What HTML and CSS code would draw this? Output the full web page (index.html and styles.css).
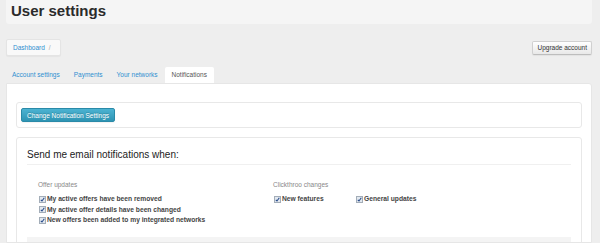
FILE: index.html
```html
<!DOCTYPE html>
<html lang="en">
<head>
  <meta charset="UTF-8">
  <meta name="viewport" content="width=device-width, initial-scale=1">
  <title>User settings</title>
  <link rel="stylesheet" href="styles.css">
</head>
<body>

<div class="page">
  <div class="page-header">
    <h1>User settings</h1>
  </div>

  <div class="toolbar">
    <ul class="breadcrumb">
      <li><a href="#">Dashboard</a> <span class="divider">/</span></li>
    </ul>
    <button class="btn">Upgrade account</button>
  </div>

  <ul class="nav-tabs">
    <li><a href="#">Account settings</a></li>
    <li><a href="#">Payments</a></li>
    <li><a href="#">Your networks</a></li>
    <li class="active"><a href="#">Notifications</a></li>
  </ul>

  <div class="tab-content">
    <div class="well">
      <button class="btn btn-info">Change Notification Settings</button>
    </div>

    <div class="box">
      <h3>Send me email notifications when:</h3>
      <div class="columns">
        <div class="col col-offers">
          <p class="group-label">Offer updates</p>
          <label class="check"><span class="box-check"><svg width="7" height="7" viewBox="0 0 7 7"><rect x="0.5" y="0.5" width="6" height="6" fill="#e2e8ef" stroke="#a3adb8"/><path d="M1.8 3.8 L3 5 L5.3 1.8" fill="none" stroke="#2a4d8c" stroke-width="1.1"/></svg></span>My active offers have been removed</label>
          <label class="check"><span class="box-check"><svg width="7" height="7" viewBox="0 0 7 7"><rect x="0.5" y="0.5" width="6" height="6" fill="#e2e8ef" stroke="#a3adb8"/><path d="M1.8 3.8 L3 5 L5.3 1.8" fill="none" stroke="#2a4d8c" stroke-width="1.1"/></svg></span>My active offer details have been changed</label>
          <label class="check"><span class="box-check"><svg width="7" height="7" viewBox="0 0 7 7"><rect x="0.5" y="0.5" width="6" height="6" fill="#e2e8ef" stroke="#a3adb8"/><path d="M1.8 3.8 L3 5 L5.3 1.8" fill="none" stroke="#2a4d8c" stroke-width="1.1"/></svg></span>New offers been added to my integrated networks</label>
        </div>
        <div class="col">
          <p class="group-label">Clickthroo changes</p>
          <div class="check-row">
            <label class="check check-inline"><span class="box-check"><svg width="7" height="7" viewBox="0 0 7 7"><rect x="0.5" y="0.5" width="6" height="6" fill="#e2e8ef" stroke="#a3adb8"/><path d="M1.8 3.8 L3 5 L5.3 1.8" fill="none" stroke="#2a4d8c" stroke-width="1.1"/></svg></span>New features</label>
            <label class="check"><span class="box-check"><svg width="7" height="7" viewBox="0 0 7 7"><rect x="0.5" y="0.5" width="6" height="6" fill="#e2e8ef" stroke="#a3adb8"/><path d="M1.8 3.8 L3 5 L5.3 1.8" fill="none" stroke="#2a4d8c" stroke-width="1.1"/></svg></span>General updates</label>
          </div>
        </div>
      </div>
      <div class="form-actions"></div>
    </div>
  </div>
</div>

</body>
</html>
```

FILE: styles.css
```css
* {
  box-sizing: border-box;
}
body {
  font-family: 'Liberation Sans', Arial, sans-serif;
  font-size: 6.5px;
  background: #eeeeee;
  color: #333;
  margin: 0;
  height: 243px;
  overflow: hidden;
}
a {
  color: #2f8fd0;
  text-decoration: none;
}
.page {
  padding: 0 8px 0 6px;
}
.page-header {
  background: #f5f5f5;
  height: 24px;
  padding-left: 5px;
  border-radius: 0 0 3px 3px;
}
.page-header h1 {
  margin: 0;
  font-size: 15px;
  line-height: 22px;
  font-weight: 700;
  color: #2b2b2b;
}
.toolbar {
  display: flex;
  justify-content: space-between;
  align-items: center;
  margin-top: 15px;
}
.breadcrumb {
  list-style: none;
  margin: 0;
  padding: 0 10px 0 6px;
  height: 17px;
  line-height: 15px;
  background: #f9f9f9;
  border: 1px solid #e4e4e4;
  border-radius: 2px;
  box-shadow: 0 1px 1px rgba(0,0,0,0.04);
}
.breadcrumb .divider {
  color: #aaa;
  padding-left: 2px;
}
.btn {
  font-family: inherit;
  font-size: 6.5px;
  color: #333;
  height: 14px;
  padding: 0 4px;
  background: linear-gradient(#ffffff, #e8e8e8);
  border: 1px solid #d0d0d0;
  border-bottom-color: #bdbdbd;
  border-radius: 2px;
  box-shadow: 0 1px 1px rgba(0,0,0,0.05);
  cursor: pointer;
}
.btn-info {
  color: #fff;
  background: linear-gradient(#4cb3d2, #2e94b3);
  border-color: #2a8aa8;
  text-shadow: 0 -1px 0 rgba(0,0,0,0.2);
  padding: 0 5px;
}
.nav-tabs {
  list-style: none;
  display: flex;
  margin: 11px 0 0 -1px;
  padding: 0;
  height: 16px;
}
.nav-tabs li a {
  display: block;
  padding: 0 7px;
  line-height: 16px;
  border-radius: 2px 2px 0 0;
}
.nav-tabs li.active a {
  background: #fff;
  color: #555;
}
.tab-content {
  background: #fff;
  border: 1px solid #e6e6e6;
  border-radius: 0 3px 0 0;
  padding: 18px 9px 0;
  height: 160px;
  overflow: hidden;
}
.well {
  border: 1px solid #e8e8e8;
  border-radius: 3px;
  padding: 5px 4px;
}
.box {
  margin-top: 9px;
  border: 1px solid #e8e8e8;
  border-radius: 3px;
  padding: 11px 10px 0;
}
.box h3 {
  margin: 0;
  font-size: 10px;
  line-height: 12px;
  font-weight: 400;
  color: #222;
  padding-bottom: 3px;
  border-bottom: 1px solid #f0f0f0;
}
.columns {
  display: flex;
  margin-top: 15px;
}
.col {
  padding-left: 12px;
}
.col-offers {
  width: 235px;
}
.group-label {
  margin: 0 0 5px -1px;
  line-height: 9px;
  color: #888;
}
.check {
  display: flex;
  align-items: center;
  line-height: 10.5px;
  font-size: 6.7px;
  font-weight: 700;
  color: #444;
}
.box-check {
  display: inline-flex;
  margin-right: 1px;
}
.check-row {
  display: flex;
}
.check-inline {
  width: 82px;
}
.form-actions {
  margin-top: 11px;
  height: 20px;
  background: #f4f4f4;
}
```
